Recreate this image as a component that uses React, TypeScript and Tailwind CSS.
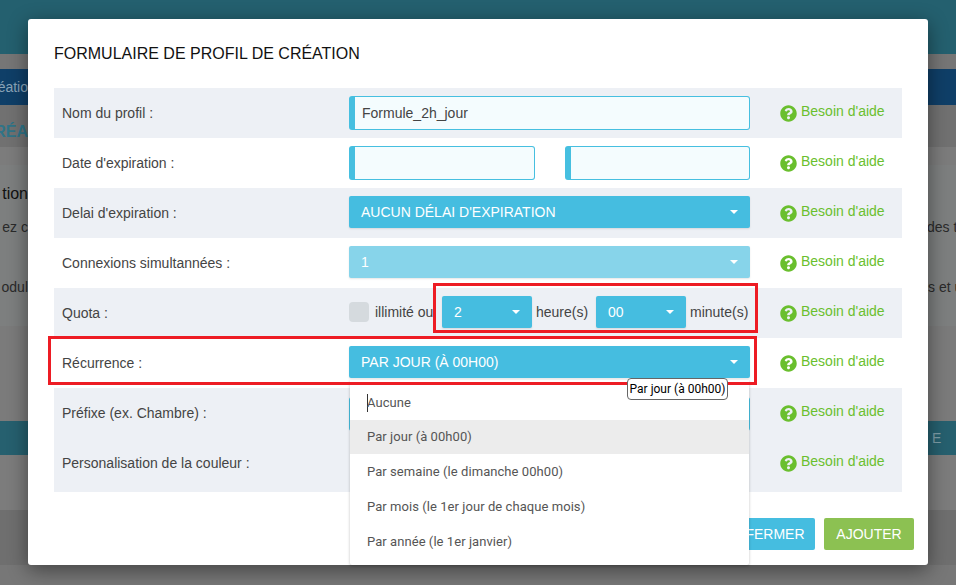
import { FaQuestionCircle } from 'react-icons/fa'

function Strip({ className, left, right }: { className: string; left?: React.ReactNode; right?: React.ReactNode }) {
  return (
    <div className={`flex justify-between ${className}`}>
      <div className="flex w-[28px] items-center justify-end overflow-hidden whitespace-nowrap">{left}</div>
      <div className="flex w-[28px] items-center overflow-hidden whitespace-nowrap">{right}</div>
    </div>
  )
}

function Backdrop() {
  return (
    <div className="flex h-[585px] flex-col bg-[#7b7b7b] text-[14px] text-[#2a2a2a]">
      <Strip className="h-[54px] bg-[#24606f]" />
      <Strip className="h-[15px] bg-[#767676]" />
      <Strip
        className="h-[36px] bg-[#0f3f68] text-[#8aa4b8]"
        left={<span className="text-[14px]">réatio</span>}
      />
      <Strip
        className="h-[42px] bg-[#717171] pt-[12px] text-[16px] font-bold text-[#2f7488]"
        left={<span>RÉA</span>}
      />
      <Strip className="h-[18px] bg-[#7c7c7c]" />
      <Strip className="h-[42px] bg-[#7d7f7f] pt-[16px] text-[16px] text-[#111]" left={<span>tion</span>} />
      <Strip
        className="h-[40px] bg-[#7d7f7f]"
        left={<span>ez c</span>}
        right={<span className="-ml-[1px]">des ti</span>}
      />
      <Strip className="h-[20px] bg-[#7d7f7f]" />
      <Strip className="h-[40px] bg-[#7d7f7f]" left={<span>odul</span>} right={<span>s et u</span>} />
      <Strip className="h-[19px] bg-[#7d7f7f]" />
      <Strip className="h-[95px] bg-[#7b7b7b]" />
      <Strip
        className="h-[34px] bg-[#26606f] text-[#7f9ea8]"
        right={<span className="text-[14px]">&nbsp;E</span>}
      />
      <Strip className="h-[55px] bg-[#7c7c7c]" />
      <Strip className="h-[55px] bg-[#6f6f6f]" />
      <Strip className="h-[20px] bg-[#777777]" />
    </div>
  )
}

function Caret() {
  return <span className="h-0 w-0 border-x-[4px] border-t-[4px] border-x-transparent border-t-white" />
}

function Select({ value, className = '', muted = false }: { value: string; className?: string; muted?: boolean }) {
  return (
    <div
      className={`flex h-[32px] items-center justify-between rounded-[2px] px-3 text-[14px] text-white shadow-[0_1px_2px_rgba(0,0,0,0.1)] ${
        muted ? 'bg-[#87d4ea]' : 'bg-[#45bde0]'
      } ${className}`}
    >
      <span>{value}</span>
      <Caret />
    </div>
  )
}

function TextInput({ value = '', className = '' }: { value?: string; className?: string }) {
  return (
    <div
      className={`flex h-[34px] items-center rounded-[3px] border border-l-[6px] border-[#46bfe0] bg-[#f4fcfe] pl-[7px] text-[14px] text-[#444] ${className}`}
    >
      {value}
    </div>
  )
}

function Row({
  label,
  shaded,
  tall,
  children,
}: {
  label: string
  shaded?: boolean
  tall?: boolean
  children?: React.ReactNode
}) {
  return (
    <div className={`flex ${tall ? 'h-[54px]' : 'h-[50px]'} ${shaded ? 'bg-[#edf0f5]' : ''}`}>
      <div className={`flex w-[295px] items-center pl-2 text-[14px] text-[#444] ${tall ? 'pb-[4px]' : ''}`}>{label}</div>
      <div className="w-[401px] pt-[8px]">{children}</div>
      <div className={`flex items-center gap-[4px] pl-[30px] text-[14px] text-[#6abf2e] ${tall ? 'pb-[4px]' : ''}`}>
        <FaQuestionCircle className="h-[17px] w-[17px]" />
        <span className="-mt-[3px]">Besoin d'aide</span>
      </div>
    </div>
  )
}

const options = [
  'Par jour (à 00h00)',
  'Par semaine (le dimanche 00h00)',
  'Par mois (le 1er jour de chaque mois)',
  'Par année (le 1er janvier)',
]

function Dropdown() {
  return (
    <div className="absolute left-[322px] top-[361px] z-10 w-[399px] rounded-b-[2px] bg-white pb-[6px] pt-[5px] font-['Roboto',sans-serif] text-[13px] tracking-[0.06px] text-[#555] shadow-[0_1px_3px_rgba(0,0,0,0.25)]">
      <div className="flex h-[35px] items-center pl-[17px]">
        <span className="-mr-[1px] h-[18px] w-[1px] bg-[#333]" />
        Aucune
      </div>
      {options.map((option, i) => (
        <div
          key={option}
          className={`flex items-center pl-[17px] ${i === 0 ? 'h-[34px] bg-[#ececec]' : 'h-[35px]'}`}
        >
          {option}
        </div>
      ))}
    </div>
  )
}

export default function App() {
  return (
    <div className="relative h-[585px] overflow-hidden font-['Liberation_Sans',sans-serif]">
      <Backdrop />
      <div className="absolute left-[28px] top-[19px] h-[546px] w-[900px] rounded-[3px] bg-white shadow-[0_5px_20px_rgba(0,0,0,0.45)]">
        <h1 className="pl-[26px] pt-[25px] text-[16px] leading-[20px] text-[#111]">FORMULAIRE DE PROFIL DE CRÉATION</h1>
        <div className="mx-[26px] mt-[24px] w-[848px]">
          <Row label="Nom du profil :" shaded>
            <TextInput value="Formule_2h_jour" />
          </Row>
          <Row label="Date d'expiration :">
            <div className="flex justify-between">
              <TextInput className="w-[186px]" />
              <TextInput className="w-[185px]" />
            </div>
          </Row>
          <Row label="Delai d'expiration :" shaded>
            <Select value="AUCUN DÉLAI D'EXPIRATION" />
          </Row>
          <Row label="Connexions simultannées :">
            <Select value="1" muted />
          </Row>
          <Row label="Quota :" shaded>
            <div className="flex items-center whitespace-nowrap text-[14px] text-[#444]">
              <span className="mr-[6px] h-[20px] w-[20px] rounded-[4px] bg-[#d5dade]" />
              <span className="w-[67px]">illimité ou</span>
              <Select value="2" className="w-[90px]" />
              <span className="w-[64px] pl-[4px]">heure(s)</span>
              <Select value="00" className="w-[90px]" />
              <span className="pl-[4px]">minute(s)</span>
            </div>
          </Row>
          <Row label="Récurrence :">
            <Select value="PAR JOUR (À 00H00)" className="relative z-20" />
          </Row>
          <Row label="Préfixe (ex. Chambre) :" shaded>
            <TextInput className="mt-[1px] h-[31px]" />
          </Row>
          <Row label="Personalisation de la couleur :" shaded tall />
        </div>
        <div className="mt-[26px] flex justify-end gap-[9px] pr-[14px] text-[14px] text-white">
          <button className="h-[32px] w-[80px] rounded-[2px] bg-[#45bde0]">FERMER</button>
          <button className="h-[32px] w-[90px] rounded-[2px] bg-[#8cc152]">AJOUTER</button>
        </div>

        <Dropdown />

        {/* red annotation frames and native tooltip lie over the form */}
        <div className="absolute left-[405px] top-[264px] z-30 h-[50px] w-[325px] border-[3px] border-[#ed1c24]" />
        <div className="absolute left-[20px] top-[317px] z-30 h-[49px] w-[709px] border-[3px] border-[#ed1c24]" />
        <div className="absolute left-[599px] top-[359px] z-40 flex h-[22px] w-[101px] items-center justify-center rounded-[4px] border border-[#666] bg-white font-['Roboto',sans-serif] text-[12px] text-black">
          Par jour (à 00h00)
        </div>
      </div>
    </div>
  )
}
